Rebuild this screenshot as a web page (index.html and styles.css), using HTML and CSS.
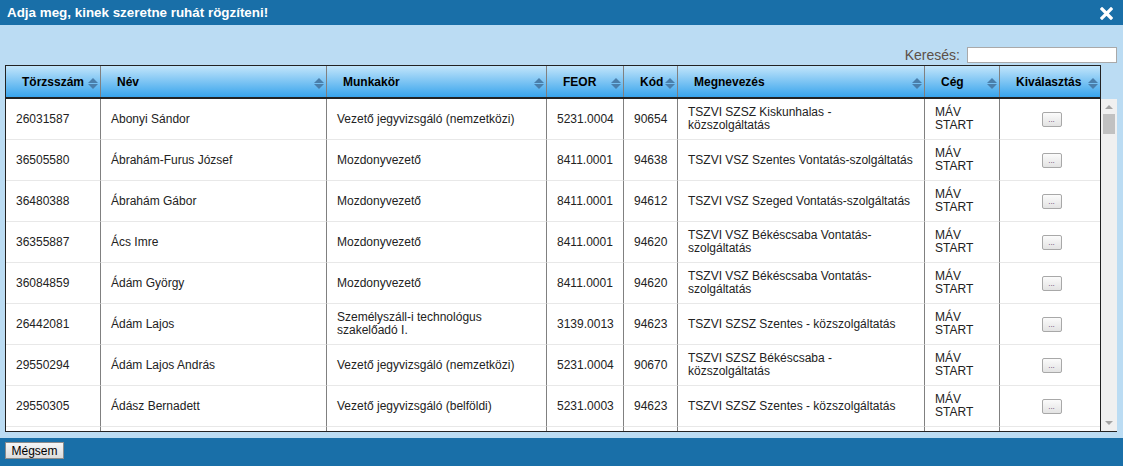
FILE: index.html
```html
<!DOCTYPE html>
<html lang="hu">
<head>
    <meta charset="UTF-8">
    <title>Ruha rögzítése</title>
    <link rel="stylesheet" href="styles.css">
</head>
<body>
    <div class="dialog">
        <!-- Fejléc -->
        <div class="titlebar">
            <span class="title">Adja meg, kinek szeretne ruhát rögzíteni!</span>
            <button class="close" title="Bezárás">
                <svg width="13" height="13" viewBox="0 0 13 13"><path d="M2 2 L11 11 M11 2 L2 11" stroke="#fff" stroke-width="3.2" stroke-linecap="square"/></svg>
            </button>
        </div>

        <div class="content">
            <div class="search">
                <label for="kereses">Keresés:</label>
                <input type="text" id="kereses">
            </div>

            <div class="grid">
                <table class="grid-head">
                    <thead>
                        <tr>
                            <th class="c1"><div class="th-in">Törzsszám<span class="sort"></span></div></th>
                            <th class="c2"><div class="th-in">Név<span class="sort"></span></div></th>
                            <th class="c3"><div class="th-in">Munkakör<span class="sort"></span></div></th>
                            <th class="c4"><div class="th-in">FEOR<span class="sort"></span></div></th>
                            <th class="c5"><div class="th-in">Kód<span class="sort"></span></div></th>
                            <th class="c6"><div class="th-in">Megnevezés<span class="sort"></span></div></th>
                            <th class="c7"><div class="th-in">Cég<span class="sort"></span></div></th>
                            <th class="c8"><div class="th-in">Kiválasztás<span class="sort"></span></div></th>
                        </tr>
                    </thead>
                </table>
                <div class="grid-body">
                    <div class="viewport">
                        <table class="grid-rows">
                            <tbody>
                                <tr><td class="c1">26031587</td><td class="c2">Abonyi Sándor</td><td class="c3">Vezető jegyvizsgáló (nemzetközi)</td><td class="c4">5231.0004</td><td class="c5">90654</td><td class="c6">TSZVI SZSZ Kiskunhalas - közszolgáltatás</td><td class="c7">MÁV<br>START</td><td class="c8"><button class="pick">...</button></td></tr>
                                <tr><td class="c1">36505580</td><td class="c2">Ábrahám-Furus József</td><td class="c3">Mozdonyvezető</td><td class="c4">8411.0001</td><td class="c5">94638</td><td class="c6">TSZVI VSZ Szentes Vontatás-szolgáltatás</td><td class="c7">MÁV<br>START</td><td class="c8"><button class="pick">...</button></td></tr>
                                <tr><td class="c1">36480388</td><td class="c2">Ábrahám Gábor</td><td class="c3">Mozdonyvezető</td><td class="c4">8411.0001</td><td class="c5">94612</td><td class="c6">TSZVI VSZ Szeged Vontatás-szolgáltatás</td><td class="c7">MÁV<br>START</td><td class="c8"><button class="pick">...</button></td></tr>
                                <tr><td class="c1">36355887</td><td class="c2">Ács Imre</td><td class="c3">Mozdonyvezető</td><td class="c4">8411.0001</td><td class="c5">94620</td><td class="c6">TSZVI VSZ Békéscsaba Vontatás-szolgáltatás</td><td class="c7">MÁV<br>START</td><td class="c8"><button class="pick">...</button></td></tr>
                                <tr><td class="c1">36084859</td><td class="c2">Ádám György</td><td class="c3">Mozdonyvezető</td><td class="c4">8411.0001</td><td class="c5">94620</td><td class="c6">TSZVI VSZ Békéscsaba Vontatás-szolgáltatás</td><td class="c7">MÁV<br>START</td><td class="c8"><button class="pick">...</button></td></tr>
                                <tr><td class="c1">26442081</td><td class="c2">Ádám Lajos</td><td class="c3">Személyszáll-i technológus szakelőadó I.</td><td class="c4">3139.0013</td><td class="c5">94623</td><td class="c6">TSZVI SZSZ Szentes - közszolgáltatás</td><td class="c7">MÁV<br>START</td><td class="c8"><button class="pick">...</button></td></tr>
                                <tr><td class="c1">29550294</td><td class="c2">Ádám Lajos András</td><td class="c3">Vezető jegyvizsgáló (nemzetközi)</td><td class="c4">5231.0004</td><td class="c5">90670</td><td class="c6">TSZVI SZSZ Békéscsaba - közszolgáltatás</td><td class="c7">MÁV<br>START</td><td class="c8"><button class="pick">...</button></td></tr>
                                <tr><td class="c1">29550305</td><td class="c2">Ádász Bernadett</td><td class="c3">Vezető jegyvizsgáló (belföldi)</td><td class="c4">5231.0003</td><td class="c5">94623</td><td class="c6">TSZVI SZSZ Szentes - közszolgáltatás</td><td class="c7">MÁV<br>START</td><td class="c8"><button class="pick">...</button></td></tr>
                                <tr class="empty"><td class="c1"></td><td class="c2"></td><td class="c3"></td><td class="c4"></td><td class="c5"></td><td class="c6"></td><td class="c7"></td><td class="c8"></td></tr>
                            </tbody>
                        </table>
                    </div>
                    <!-- Görgetősáv -->
                    <div class="scrollbar">
                        <span class="arrow arrow-up"></span>
                        <div class="track"><div class="thumb"></div></div>
                        <span class="arrow arrow-down"></span>
                    </div>
                </div>
            </div>
        </div>

        <!-- Gombsor -->
        <div class="footer">
            <button class="btn">Mégsem</button>
        </div>
    </div>
</body>
</html>
```

FILE: styles.css
```css
body {
    margin: 0;
    font-family: "Liberation Sans", Arial, sans-serif;
    background-color: #bbdcf3;
}

.dialog {
    width: 1123px;
    height: 466px;
    display: flex;
    flex-direction: column;
}

/* Címsor */
.titlebar {
    height: 25px;
    background-color: #196fa8;
    display: flex;
    align-items: center;
    justify-content: space-between;
    padding: 0 10px 0 7px;
}

.title {
    color: #fff;
    font-size: 13.4px;
    font-weight: bold;
}

.close {
    border: 0;
    background: none;
    padding: 0;
    margin-top: 2px;
    width: 13px;
    height: 13px;
    cursor: pointer;
}

.close svg {
    display: block;
}

.content {
    flex: 1;
    background-color: #bbdcf3;
    padding: 0 5px;
}

/* Keresés */
.search {
    display: flex;
    justify-content: flex-end;
    align-items: center;
    gap: 7px;
    padding: 22px 1px 2px 0;
}

.search label {
    font-size: 14px;
    color: #5b5048;
}

.search input {
    width: 150px;
    height: 16px;
    box-sizing: border-box;
    border: 1px solid #a9a9a9;
    background: #fff;
    margin: 0;
    padding: 0 2px;
}

/* Táblázat */
.grid {
    width: 1112px;
}

.grid table {
    table-layout: fixed;
    border-collapse: separate;
    border-spacing: 0;
}

.grid th,
.grid td {
    box-sizing: border-box;
    border-right: 1px solid #808080;
}

.grid-head {
    width: 1096px;
    border: 1px solid #222;
    border-bottom: 2px solid #222;
}

.grid-head th {
    height: 31px;
    padding: 0;
    font-size: 12px;
    font-weight: bold;
    color: #000;
    text-align: left;
    background: linear-gradient(#c2e5fb, #38a4ec);
}

.grid-head th:last-child {
    border-right: 0;
}

.th-in {
    display: flex;
    align-items: center;
    padding: 0 2px 0 16px;
}

/* Rendezés jelző */
.sort {
    margin-left: auto;
    display: flex;
    flex-direction: column;
    gap: 1px;
    margin-top: 3px;
}

.sort::before,
.sort::after {
    content: '';
    width: 0;
    height: 0;
    border-left: 5px solid transparent;
    border-right: 5px solid transparent;
}

.sort::before {
    border-bottom: 5px solid #4a7fab;
}

.sort::after {
    border-top: 5px solid #4a7fab;
}

.c1 { width: 95px; }
.c2 { width: 226px; }
.c3 { width: 220px; }
.c4 { width: 77px; }
.c5 { width: 54px; }
.c6 { width: 247px; }
.c7 { width: 75px; }
.c8 { width: 100px; }

.grid-body {
    display: flex;
    height: 332px;
    border-left: 1px solid #222;
    border-bottom: 1px solid #222;
}

.viewport {
    width: 1095px;
    overflow: hidden;
    background: #fff;
    border-right: 1px solid #222;
    box-sizing: border-box;
}

.grid-rows {
    width: 1094px;
}

.grid-rows td {
    height: 41px;
    padding: 0 8px 0 10px;
    font-size: 12px;
    line-height: 13px;
    color: #222;
    border-bottom: 1px solid #e8e8e8;
    vertical-align: middle;
}

.grid-rows td.c8 {
    border-right: 0;
    text-align: center;
}

.pick {
    width: 20px;
    height: 15px;
    padding: 0;
    margin-left: 1px;
    border: 1px solid #a8a8a8;
    border-radius: 2px;
    background: linear-gradient(#fbfbfb, #e3e3e3);
    font-size: 8px;
    line-height: 11px;
    color: #5a3a6a;
    font-family: "Liberation Sans", Arial, sans-serif;
    cursor: pointer;
}

/* Görgetősáv */
.scrollbar {
    width: 16px;
    background: #f0f0f0;
    display: flex;
    flex-direction: column;
    align-items: center;
}

.arrow {
    width: 0;
    height: 0;
    border-left: 4px solid transparent;
    border-right: 4px solid transparent;
}

.arrow-up {
    margin: 6px 0 5px;
    border-bottom: 4px solid #a3a3a3;
}

.arrow-down {
    margin: 5px 0 6px;
    border-top: 4px solid #a3a3a3;
}

.track {
    flex: 1;
    width: 12px;
}

.thumb {
    height: 20px;
    background: #c1c1c1;
}

/* Alsó gombsor */
.footer {
    height: 28px;
    background-color: #196fa8;
    display: flex;
    align-items: center;
    padding: 0 5px;
}

.btn {
    height: 17px;
    width: 59px;
    padding: 0;
    margin-top: -3px;
    border: 1px solid #8c8c8c;
    background: linear-gradient(#f6f6f6, #dcdcdc);
    font-family: "Liberation Sans", Arial, sans-serif;
    font-size: 12px;
    color: #000;
    cursor: pointer;
}
```
